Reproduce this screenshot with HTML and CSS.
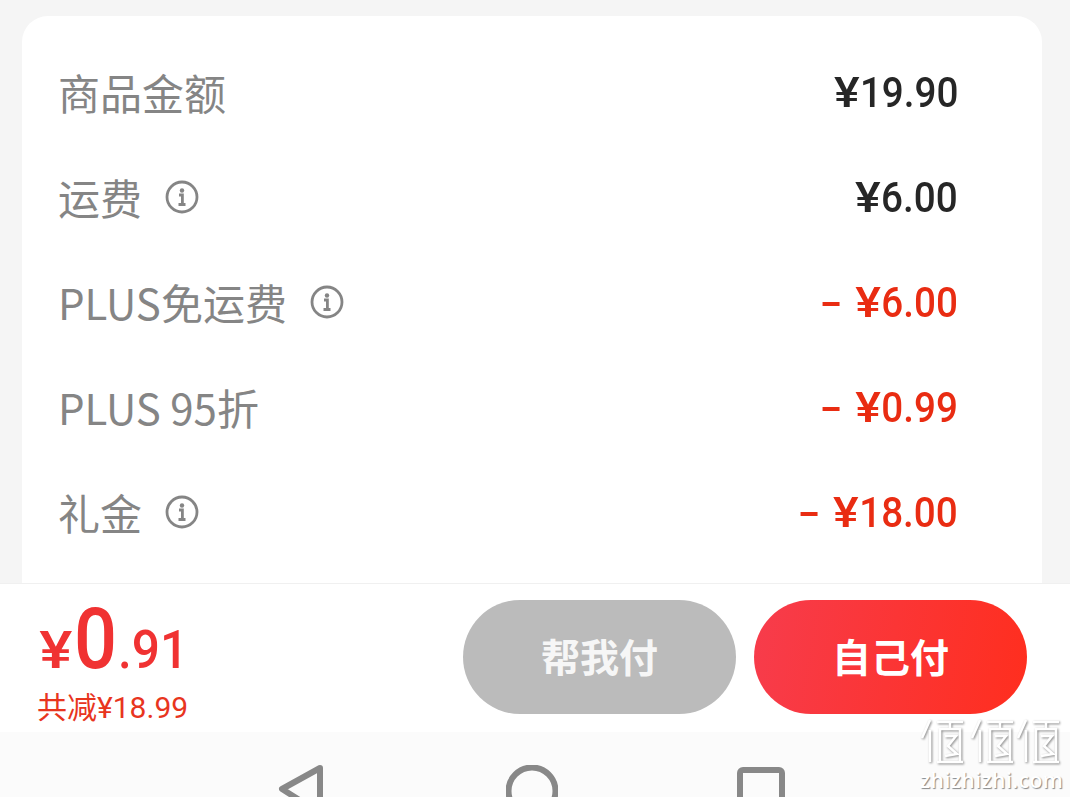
FILE: index.html
```html
<!DOCTYPE html>
<html lang="zh-CN">
<head>
<meta charset="utf-8">
<title>订单金额</title>
<link rel="stylesheet" href="styles.css">
</head>
<body>
<div class="page">
  <section class="card">
    <div class="row"><div class="label">商品金额</div><div class="amt"><span class="y">¥</span>19.90</div></div>
    <div class="row"><div class="label">运费<svg class="info" viewBox="0 0 34 34"><circle cx="17" cy="17" r="15" /><circle class="dot" cx="17" cy="10.500" r="2.200"/><path d="M14 15h3.400v9M13.500 24.500h7"/></svg></div><div class="amt"><span class="y">¥</span>6.00</div></div>
    <div class="row"><div class="label">PLUS免运费<svg class="info" viewBox="0 0 34 34"><circle cx="17" cy="17" r="15" /><circle class="dot" cx="17" cy="10.500" r="2.200"/><path d="M14 15h3.400v9M13.500 24.500h7"/></svg></div><div class="amt red"><span class="minus">-</span><span class="y">¥</span>6.00</div></div>
    <div class="row"><div class="label">PLUS 95折</div><div class="amt red"><span class="minus">-</span><span class="y">¥</span>0.99</div></div>
    <div class="row"><div class="label">礼金<svg class="info" viewBox="0 0 34 34"><circle cx="17" cy="17" r="15" /><circle class="dot" cx="17" cy="10.500" r="2.200"/><path d="M14 15h3.400v9M13.500 24.500h7"/></svg></div><div class="amt red"><span class="minus">-</span><span class="y">¥</span>18.00</div></div>
  </section>
  <footer class="bar">
    <div class="total">
      <div class="price"><span class="cur">¥</span><span class="int">0</span><span class="dec">.91</span></div>
      <div class="saved">共减¥18.99</div>
    </div>
    <div class="actions">
      <div class="btn gray">帮我付</div>
      <div class="btn hot">自己付</div>
    </div>
  </footer>
  <nav class="nav">
    <svg class="ico tri" viewBox="0 0 46 60"><path d="M42 3 4 24l38 24z"/></svg>
    <svg class="ico cir" viewBox="0 0 52 60"><circle cx="26" cy="26" r="23.500"/></svg>
    <svg class="ico sq" viewBox="0 0 48 60"><rect x="3" y="3" width="42" height="50" rx="3"/></svg>
  </nav>
  <div class="mark">
    <svg class="mark-logo" viewBox="0 0 140 50">
      <defs><path id="zhi" d="M2 22 10 4M10 14v32M17 6h26M30 6v7M20 13h20v33H20zM17 46h26M25 20h11l-8 10 9 8-12 2"/></defs>
      <use href="#zhi"/><use href="#zhi" x="50"/><use href="#zhi" x="96"/>
    </svg>
    <div class="mark-text">zhizhizhi.com</div>
  </div>
</div>
</body>
</html>
```
FILE: styles.css
```css
* { box-sizing: border-box; }
html, body { margin: 0; padding: 0; }
body { font-family: "Noto Sans CJK SC", "Noto Sans", sans-serif; background: #f5f5f5; }
.page { position: relative; width: 1070px; height: 797px; overflow: hidden; display: flex; flex-direction: column; }
.card { flex: 1; min-height: 0; margin: 16px 28px 0 22px; padding: 26px 84px 0 36px; background: #fff; border-radius: 26px 26px 0 0; overflow: hidden; }
.row { height: 105px; display: flex; align-items: center; justify-content: space-between; }
.label { display: flex; align-items: center; font-size: 42px; line-height: 1; color: #858585; margin-top: -5px; font-weight: 400; }
.info { width: 34px; height: 34px; margin-left: 23px; margin-top: 0; fill: none; stroke: #858585; stroke-width: 2.800; }
.info .dot { fill: #858585; stroke: none; }
.amt { font-family: "Roboto", "Noto Sans CJK SC", sans-serif; font-size: 42px; font-weight: 500; line-height: 1; color: #262626; margin-top: -4px; transform: scaleX(0.92); transform-origin: right center; }
.red { color: #e92c12; }
.y { display: inline-block; transform: scaleX(1.250); margin: 0 3px 0 0; }
.minus { display: inline-block; transform: scaleX(1.700); margin-right: 22px; }
.bar { height: 149px; flex: none; background: #fff; border-top: 1px solid #f0f0f0; display: flex; justify-content: space-between; padding: 16px 43px 0 37px; }
.total { color: #f03232; }
.price { display: flex; align-items: baseline; height: 84px; margin-top: -3px; font-family: "Roboto", sans-serif; font-weight: 500; line-height: 84px; }
.cur { display: inline-block; font-size: 52px; transform: scaleX(1.200); margin: 0 4px 0 5px; }
.int { display: inline-block; font-size: 86px; transform: scaleX(0.880); margin: 0 -2px 0 -3px; }
.dec { display: inline-block; font-size: 54px; transform: scaleX(0.920); transform-origin: left center; }
.saved { font-size: 30px; line-height: 36px; margin-top: 9px; color: #e8351e; font-family: "Roboto", "Noto Sans CJK SC", sans-serif; }
.actions { display: flex; gap: 18px; }
.btn { width: 273px; height: 114px; padding-bottom: 4px; border-radius: 57px; display: flex; align-items: center; justify-content: center; color: #fff; font-size: 39px; font-weight: 700; }
.gray { background: #bbbbbb; color: #f6f6f6; }
.hot { background: linear-gradient(100deg, #f73c4c, #ff2e1e); }
.nav { height: 65px; flex: none; background: #fbfbfb; display: flex; padding: 33px 0 0 278px; overflow: hidden; }
.ico { flex: none; height: 60px; fill: none; stroke: #888; stroke-width: 6; stroke-linejoin: round; }
.tri { width: 46px; }
.cir { width: 52px; margin-left: 182px; }
.sq { width: 48px; margin-left: 179px; margin-top: 2px; }
.mark { position: absolute; left: 920px; top: 716px; width: 142px; text-align: center; }
.mark-logo { display: block; width: 140px; height: 50px; fill: none; stroke: #fff; stroke-width: 2.500; filter: drop-shadow(1px 1px 1px #888); }
.mark-text { font-family: "Open Sans", sans-serif; font-size: 21px; font-weight: 600; line-height: 24px; letter-spacing: 0.5px; margin-top: 2px; color: #fff; text-shadow: 1px 1px 1px #888; white-space: nowrap; }
```
